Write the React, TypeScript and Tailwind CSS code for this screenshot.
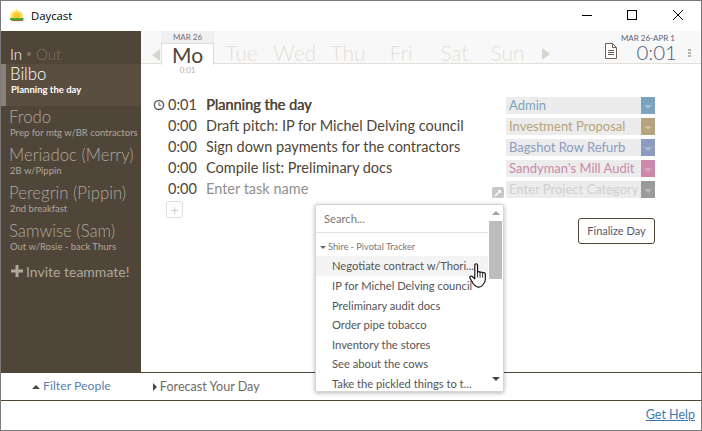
const people = [
  { name: 'Frodo', note: 'Prep for mtg w/BR contractors' },
  { name: 'Meriadoc (Merry)', note: '2B w/Pippin' },
  { name: 'Peregrin (Pippin)', note: '2nd breakfast' },
  { name: 'Samwise (Sam)', note: 'Out w/Rosie - back Thurs' },
];

const days = ['Tue', 'Wed', 'Thu', 'Fri', 'Sat', 'Sun'];

const tasks = [
  { time: '0:00', name: 'Draft pitch: IP for Michel Delving council' },
  { time: '0:00', name: 'Sign down payments for the contractors' },
  { time: '0:00', name: 'Compile list: Preliminary docs' },
];

const categories = [
  { name: 'Admin', text: 'text-[#7ba3bd]', box: 'bg-[#7ba3bd]' },
  { name: 'Investment Proposal', text: 'text-[#b5a47c]', box: 'bg-[#b5a47c]' },
  { name: 'Bagshot Row Refurb', text: 'text-[#8d9bc0]', box: 'bg-[#8d9bc0]' },
  { name: "Sandyman's Mill Audit", text: 'text-[#cb88a8]', box: 'bg-[#cb88a8]' },
  { name: 'Enter Project Category', text: 'text-[#d0d0d0]', box: 'bg-[#9a9a9a]' },
];

const menuItems = [
  'IP for Michel Delving council',
  'Preliminary audit docs',
  'Order pipe tobacco',
  'Inventory the stores',
  'See about the cows',
  'Take the pickled things to t...',
];

function Logo() {
  return (
    <svg width="16" height="14" viewBox="0 0 16 14">
      <path d="M7.500 0l1 2.500L10.500 1l.3 2.500 2.300-.8-.7 2.300 2.600.2-1.800 1.800L14.500 9h-13l.8-2-1.800-1.800 2.600-.2-.7-2.300 2.300.8L5 1l1.500 1.500z" fill="#fbdc5a" />
      <circle cx="8" cy="7" r="3.500" fill="#f8c92e" />
      <path d="M1 9h13.500v2H1z" fill="#49a83a" />
      <path d="M2 11h12.500l-1 1H3z" fill="#9a6a2a" />
    </svg>
  );
}

function ClockIcon() {
  return (
    <svg width="12" height="12" viewBox="0 0 12 12" fill="none" stroke="#5f5f5f">
      <circle cx="6" cy="6" r="4.600" strokeWidth="1.500" />
      <path d="M6 3.200V6.300H8.200" strokeWidth="1" />
    </svg>
  );
}

function HandCursor() {
  return (
    <svg width="20" height="25" viewBox="0 0 19 25" preserveAspectRatio="none">
      <path
        d="M5.500 2c0-1.700 2.600-1.700 2.600 0v7.500c0-1.200 2.400-1.200 2.400.3 0-1.100 2.400-1.100 2.400.4 0-1 2.600-.8 2.600.8v5.500c0 2.800-1.300 4-2.500 5.500-1.200 1.800-3 2.500-5 2-2.600-.6-3.500-2.500-4.500-4C3 18.500 1.600 16.500.9 15c-.7-1.600 1-2.600 2.300-1.500l2.300 2.300z"
        fill="#fff"
        stroke="#111"
        strokeWidth="1.100"
        strokeLinejoin="round"
      />
      <path d="M8.100 9.500v5M10.500 9.800v5M12.900 10.200v4.500" stroke="#111" strokeWidth="0.800" />
    </svg>
  );
}

export default function App() {
  return (
    <div className="w-[702px] h-[431px] flex flex-col border border-[#7a7a7a] bg-white overflow-hidden relative font-['Lato',sans-serif] text-[#4f4539]">
      {/* Title bar */}
      <div className="h-[30px] shrink-0 flex items-center pl-[8px] text-black">
        <Logo />
        <span className="ml-[6px] text-[11.300px] font-['Open_Sans',sans-serif]">Daycast</span>
        <div className="ml-auto flex h-full items-center">
          <svg width="46" height="30" viewBox="0 0 46 30" stroke="#000" fill="none">
            <path d="M19 14.500h10" />
          </svg>
          <svg width="46" height="30" viewBox="0 0 46 30" stroke="#000" fill="none">
            <rect x="18.500" y="9.500" width="9" height="9" />
          </svg>
          <svg width="46" height="30" viewBox="0 0 46 30" stroke="#000" fill="none">
            <path d="M18 9l10 10M28 9L18 19" />
          </svg>
        </div>
      </div>

      <div className="flex-1 flex min-h-0">
        {/* Sidebar */}
        <div className="w-[140px] shrink-0 bg-[#4f4539] flex flex-col pt-[13px] font-light">
          <div className="pl-[9px] h-[20px] flex items-center text-[15px] leading-none">
            <span className="text-white">In</span>
            <span className="mx-[5px] w-[4px] h-[4px] rounded-full bg-[#7c7367]" />
            <span className="text-[#7c7367]">Out</span>
          </div>
          <div className="h-[42px] bg-[#5a4e41] border-l-[5px] border-[#8a8279] pl-[4px] text-white">
            <div className="text-[16.750px] leading-[20px]">Bilbo</div>
            <div className="pl-[1px] text-[9.500px] leading-[11px] font-bold">Planning the day</div>
          </div>
          <div className="flex flex-col gap-[7px] pt-[1px]">
            {people.map((p) => (
              <div key={p.name} className="pl-[9px] h-[31px] text-[#b0a89c]">
                <div className="-ml-px text-[16.750px] leading-[20px] whitespace-nowrap">{p.name}</div>
                <div className="text-[9.500px] leading-[11px] font-normal whitespace-nowrap">{p.note}</div>
              </div>
            ))}
          </div>
          <div className="pl-[10px] mt-[10px] h-[18px] flex items-center gap-[3px] text-[#b0a89c] text-[14px] font-normal">
            <svg width="12" height="12" viewBox="0 0 12 12" fill="#b0a89c">
              <path d="M4.500 0h3v4.500H12v3H7.500V12h-3V7.500H0v-3h4.500z" />
            </svg>
            Invite teammate!
          </div>
        </div>

        {/* Main column */}
        <div className="flex-1 min-w-0 flex flex-col">
          {/* Week strip */}
          <div className="h-[33px] shrink-0 bg-[#f8f8f8] border-b border-[#e2ded8] flex items-end relative">
            <div className="w-[20px] h-full flex items-center justify-end pr-[1px] pt-[16px]">
              <div className="w-0 h-0 border-y-[6.500px] border-y-transparent border-r-[8px] border-r-[#d8d4ce]" />
            </div>
            <div className="w-[53px] h-full flex flex-col items-center relative">
              <div className="h-[12px] w-full bg-[#f0f0f0] text-center text-[8px] leading-[13px] text-[#6f6f80]">MAR 26</div>
              <div className="w-full h-[22px] bg-white border border-b-0 border-[#e2ded8] text-center text-[21px] leading-[21px] text-[#4f4539] z-10">Mo</div>
              <div className="absolute top-[35px] left-0 w-full z-10 text-center text-[8px] leading-[9px] text-[#b9a8b0]">0:01</div>
            </div>
            <div className="flex h-[20px] pl-[1px]">
              {days.map((d) => (
                <div key={d} className="w-[53.200px] text-center text-[21px] leading-[19px] font-light text-[#e4dfd8]">{d}</div>
              ))}
            </div>
            <div className="h-[19px] flex items-center ml-[8px]">
              <div className="w-0 h-0 border-y-[6.500px] border-y-transparent border-l-[8px] border-l-[#d8d4ce]" />
            </div>
            <svg className="absolute left-[463px] top-[12px]" width="14" height="16" viewBox="0 0 14 16" fill="#fff" stroke="#6b6157">
              <path d="M1.500.5h7l4 4v11h-11zM8.500.5v4h4" />
              <path d="M4 7.500h6M4 9.500h6M4 11.500h6" />
            </svg>
            <div className="absolute right-[24px] top-[1px] flex flex-col items-end">
              <div className="text-[8px] leading-[10px] mt-[1px] text-[#5d6480] pr-[2px]">MAR 26-APR 1</div>
              <div className="text-[20.500px] leading-[19px] font-light text-[#4e617a]">0:01</div>
            </div>
            <div className="absolute right-[10px] top-[18px] flex flex-col gap-[1px]">
              <span className="w-[3px] h-[2px] bg-[#b9b3ab]" />
              <span className="w-[3px] h-[2px] bg-[#b9b3ab]" />
              <span className="w-[3px] h-[2px] bg-[#b9b3ab]" />
            </div>
          </div>

          {/* Tasks and categories */}
          <div className="flex-1 flex min-h-0 relative">
            <div className="pl-[12px] pt-[30px] w-[365px] flex flex-col text-[14.500px] leading-[21px]">
              <div className="flex items-center h-[21px]">
                <ClockIcon />
                <span className="ml-[3px] w-[38px]">0:01</span>
                <span className="[text-shadow:0.4px_0_0_#4f4539]">Planning the day</span>
              </div>
              {tasks.map((t) => (
                <div key={t.name} className="flex h-[21px] pl-[15px] whitespace-nowrap">
                  <span className="w-[38px]">{t.time}</span>
                  <span>{t.name}</span>
                </div>
              ))}
              <div className="flex h-[21px] pl-[15px]">
                <span className="w-[38px]">0:00</span>
                <span className="text-[#8f8f8f]">Enter task name</span>
              </div>
              <div className="ml-[13px] mt-[2px] w-[17px] h-[17px] border border-[#dedede] rounded-[3px] flex items-center justify-center text-[#d0d0d0] text-[14px] leading-none">+</div>
            </div>
            <div className="pt-[33px] w-[149px] flex flex-col gap-[4px] text-[13px] relative">
              {categories.map((c) => (
                <div key={c.name} className="h-[17px] flex bg-[#ececec]">
                  <span className={`flex-1 min-w-0 pl-[3px] leading-[17px] whitespace-nowrap ${c.text}`}>{c.name}</span>
                  <span className={`w-[14px] h-[17px] flex items-center justify-center ${c.box}`}>
                    <span className="w-0 h-0 mt-[2px] border-x-[4px] border-x-transparent border-t-[4px] border-t-white/30" />
                  </span>
                </div>
              ))}
              <div className="absolute left-[-14px] top-[123px] w-[12px] h-[11px] rounded-[2px] bg-[#c8c8c8] flex items-center justify-center">
                <svg width="8" height="8" viewBox="0 0 8 8" stroke="#fff" strokeWidth="1.500" fill="#fff">
                  <path d="M1 7l5-5" />
                  <path d="M3.500 1h3.500v3.500z" strokeWidth="0" />
                </svg>
              </div>
              <div className="self-end mt-[16px] w-[77px] h-[26px] border border-[#4f4539] rounded-[3px] text-center text-[11px] leading-[24px] text-[#55596b]">Finalize Day</div>
            </div>
          </div>

          {/* Task picker dropdown */}
          <div className="absolute left-[314px] top-[203px] w-[189px] h-[188px] bg-white rounded-[2px] border border-[#d5d5d5] shadow-[0_1px_4px_rgba(0,0,0,0.3)] flex z-20 text-[#555] text-[11.200px]">
            <div className="flex-1 min-w-0 overflow-hidden">
              <div className="h-[28px] border-b border-[#e4e4e4] pl-[8px] leading-[28px] text-[#777]">Search...</div>
              <div className="h-[23px] pl-[4px] pb-[3px] flex items-end text-[9.200px] leading-[12px] text-[#777]">
                <span className="w-0 h-0 mb-[4px] border-x-[3px] border-x-transparent border-t-[3px] border-t-[#666]" />
                <span className="ml-[2px]">Shire - Pivotal Tracker</span>
              </div>
              <div className="h-[20px] bg-[#f4f4f4] pl-[16px] leading-[20px] whitespace-nowrap">Negotiate contract w/Thori...</div>
              {menuItems.map((m) => (
                <div key={m} className="h-[19.600px] pl-[16px] leading-[20px] whitespace-nowrap">{m}</div>
              ))}
            </div>
            <div className="w-[15px] shrink-0 bg-white flex flex-col items-center">
              <div className="h-[16px] flex items-center justify-center">
                <span className="w-0 h-0 border-x-[4px] border-x-transparent border-b-[4px] border-b-[#a0a0a0]" />
              </div>
              <div className="w-[13px] h-[58px] bg-[#bdbdbd]" />
              <div className="mt-auto h-[14px] mb-[5px] flex items-center justify-center">
                <span className="w-0 h-0 border-x-[4px] border-x-transparent border-t-[4px] border-t-[#444]" />
              </div>
            </div>
          </div>
          <div className="absolute left-[468px] top-[262px] z-30">
            <HandCursor />
          </div>
        </div>
      </div>

      {/* Bottom toggles */}
      <div className="h-[29px] shrink-0 border-y border-[#4f4539] flex items-center text-[#6f6a64]">
        <span className="ml-[31px] w-0 h-0 border-x-[4px] border-x-transparent border-b-[4px] border-b-[#4f4539]" />
        <span className="ml-[3px] text-[12.300px] text-[#5b7fb0]">Filter People</span>
        <span className="ml-[42px] w-0 h-0 border-y-[4px] border-y-transparent border-l-[4px] border-l-[#4f4539]" />
        <span className="ml-[3px] text-[12.600px] leading-[16px] pt-[1px]">Forecast Your Day</span>
      </div>
      <div className="h-[29px] shrink-0 flex items-center justify-end pr-[6px]">
        <span className="text-[12.500px] text-[#3d7ab5] underline">Get Help</span>
      </div>
    </div>
  );
}
